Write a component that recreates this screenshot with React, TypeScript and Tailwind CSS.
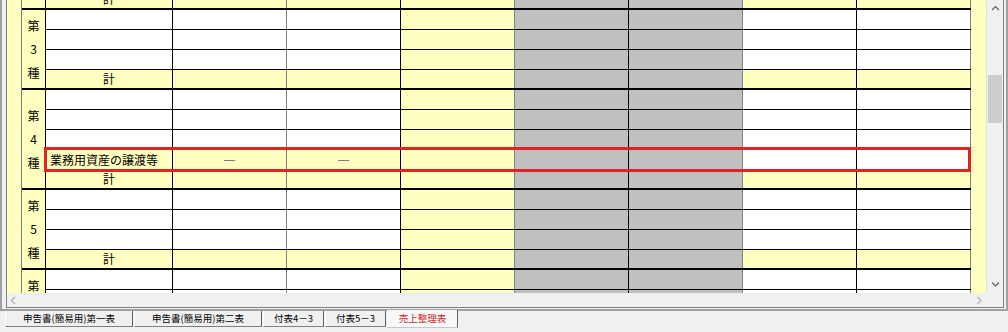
import React from 'react';

type RowKind = 'blank' | 'total' | 'asset';

interface Group {
  no: string;
  rows: RowKind[];
}

// group 2 is scrolled up out of view, only its 計 row shows at the top
const groups: Group[] = [
  { no: '', rows: ['blank', 'blank', 'blank', 'total'] },
  { no: '3', rows: ['blank', 'blank', 'blank', 'total'] },
  { no: '4', rows: ['blank', 'blank', 'blank', 'asset', 'total'] },
  { no: '5', rows: ['blank', 'blank', 'blank', 'total'] },
  { no: '6', rows: ['blank', 'blank', 'blank', 'total'] },
];

// right border colour and width of each data column
const columns = [
  { w: 'w-[127px]', line: 'border-black' },
  { w: 'w-[114px]', line: 'border-[#808080]' },
  { w: 'w-[114px]', line: 'border-black' },
  { w: 'w-[114px]', line: 'border-[#808080]' },
  { w: 'w-[114px]', line: 'border-black' },
  { w: 'w-[114px]', line: 'border-[#808080]' },
  { w: 'w-[114px]', line: 'border-black' },
  { w: 'w-[114px]', line: 'border-[#808080]' },
];

const YELLOW = 'bg-[#ffffc0]';
const GRAY = 'bg-[#c0c0c0]';
const WHITE = 'bg-white';

const cellBg = (kind: RowKind, i: number) => {
  if (i === 4 || i === 5) return GRAY;
  if (i === 3) return YELLOW;
  if (kind === 'total') return YELLOW;
  if (kind === 'asset') return i < 3 ? YELLOW : WHITE;
  return WHITE;
};

const Row: React.FC<{ kind: RowKind; last: boolean }> = ({ kind, last }) => (
  <div className={`relative flex ${last ? 'h-[18px]' : 'h-[20px] border-b border-black'}`}>
    {columns.map((col, i) => (
      <div
        key={i}
        className={`${col.w} h-full shrink-0 border-r ${col.line} ${cellBg(kind, i)} flex items-center text-[12px] leading-none`}
      >
        {kind === 'total' && i === 0 && <span className="w-full text-center">計</span>}
        {kind === 'asset' && i === 0 && <span className="pl-[4px] whitespace-nowrap">業務用資産の譲渡等</span>}
        {kind === 'asset' && (i === 1 || i === 2) && (
          <span className="w-full text-center text-[#7a7a7a] font-['DejaVu_Sans',sans-serif] text-[12px]">—</span>
        )}
      </div>
    ))}
    {kind === 'asset' && (
      <div className="absolute left-[-2px] top-[-3px] z-10 w-[927px] h-[25px] border-[3px] border-[#e02424] pointer-events-none" />
    )}
  </div>
);

const GroupBlock: React.FC<{ group: Group }> = ({ group }) => (
  <div className="flex border-b-2 border-black">
    <div className="w-[24px] shrink-0 bg-[#ffffc0] border-r border-black flex flex-col items-center justify-center text-[12px] leading-[23.5px]">
      {group.no && (
        <>
          <span>第</span>
          <span>{group.no}</span>
          <span>種</span>
        </>
      )}
    </div>
    <div className="flex flex-col">
      {group.rows.map((kind, i) => (
        <Row key={i} kind={kind} last={i === group.rows.length - 1} />
      ))}
    </div>
  </div>
);

const Chevron: React.FC<{ dir: 'up' | 'down' | 'left' | 'right'; color: string }> = ({ dir, color }) => {
  const d = {
    up: 'M1 5 L4.5 1.5 L8 5',
    down: 'M1 1.5 L4.5 5 L8 1.5',
    left: 'M5 1 L1.5 4.5 L5 8',
    right: 'M1.5 1 L5 4.5 L1.5 8',
  }[dir];
  const vertical = dir === 'up' || dir === 'down';
  return (
    <svg width={vertical ? 9 : 7} height={vertical ? 7 : 9} viewBox={vertical ? '0 0 9 7' : '0 0 7 9'}>
      <path d={d} fill="none" stroke={color} strokeWidth="1.2" />
    </svg>
  );
};

const tabs = [
  { label: '申告書(簡易用)第一表', w: 'w-[128px]' },
  { label: '申告書(簡易用)第二表', w: 'w-[128px]' },
  { label: '付表4－3', w: 'w-[61px]' },
  { label: '付表5－3', w: 'w-[61px]' },
  { label: '売上整理表', w: 'w-[71px]', active: true },
];

export default function App() {
  return (
    <div className="w-[1008px] h-[332px] overflow-hidden bg-[#f0f0f0] text-black font-['Noto_Sans_CJK_JP',sans-serif]">
      <div className="border-l-2 border-r-2 border-b-2 border-[#a0a0a0] pl-[4px] pr-[2px] pb-[1px]">
        <div className="border-l border-r border-b border-[#808080]">
          <div className="flex h-[293px]">
            <div className="w-[15px] shrink-0 bg-[#ffffc0] border-r border-[#808080]" />
            <div className="w-[949px] shrink-0 overflow-hidden bg-[#ffffc0]">
              <div className="-mt-[70px]">
                {groups.map((g, i) => (
                  <GroupBlock key={i} group={g} />
                ))}
              </div>
            </div>
            <div className="w-[15px] shrink-0 bg-[#ffffc0]" />
            <div className="w-[17px] shrink-0 bg-[#f0f0f0] border-l border-[#e0e0e0] flex flex-col items-center">
              <div className="h-[17px] flex items-center justify-center">
                <Chevron dir="up" color="#606060" />
              </div>
              <div className="flex-1 w-full px-[1px]">
                <div className="mt-[58px] h-[48px] w-full bg-[#cdcdcd]" />
              </div>
              <div className="h-[17px] flex items-center justify-center">
                <Chevron dir="down" color="#606060" />
              </div>
            </div>
          </div>
          <div className="h-[14px] flex items-center justify-between pl-[3px] pr-[20px]">
            <Chevron dir="left" color="#b0b0b0" />
            <Chevron dir="right" color="#b0b0b0" />
          </div>
        </div>
      </div>
      <div className="flex items-start gap-[1px] pl-[5px]">
        {tabs.map(t => (
          <div
            key={t.label}
            className={`${t.w} shrink-0 flex items-center justify-center whitespace-nowrap text-[9.5px] leading-none border-l border-white border-r border-r-[#606060] ${
              t.active
                ? 'h-[18px] -mt-[1px] bg-[#f8f8f8] text-[#cc1f1f] border-b border-b-[#c8c8c8]'
                : 'h-[16px] bg-[#f0f0f0] border-b border-b-[#808080]'
            }`}
          >
            {t.label}
          </div>
        ))}
      </div>
    </div>
  );
}
